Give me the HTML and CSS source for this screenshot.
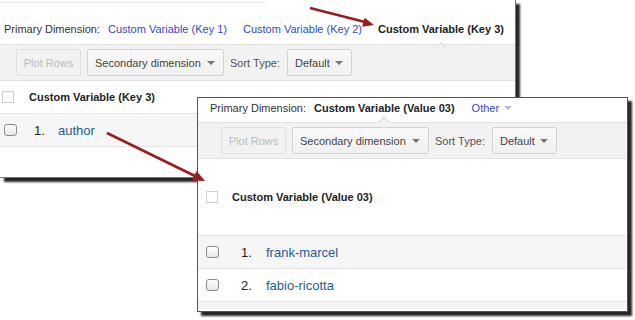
FILE: index.html
```html
<!DOCTYPE html>
<html lang="en">
<head>
    <meta charset="UTF-8">
    <title>Custom Variables</title>
    <link rel="stylesheet" href="styles.css">
</head>
<body>
    <div class="shot">
        <!-- back window: key report -->
        <div class="panel panel-back">
            <div class="panel-top"></div>
            <div class="dims">
                <span class="dims-label">Primary Dimension:</span>
                <a class="dim-link">Custom Variable (Key 1)</a>
                <a class="dim-link">Custom Variable (Key 2)</a>
                <span class="dim-current">Custom Variable (Key 3)</span>
            </div>
            <div class="toolbar">
                <button class="btn btn-plot" disabled>Plot Rows</button>
                <button class="btn btn-second">Secondary dimension <span class="caret"></span></button>
                <span class="sort-label">Sort Type:</span>
                <button class="btn btn-default">Default <span class="caret"></span></button>
            </div>
            <div class="table-head">
                <span class="check-square"></span>
                <span class="head-title">Custom Variable (Key 3)</span>
            </div>
            <div class="row row-shaded">
                <span class="check"></span>
                <span class="row-num">1.</span>
                <a class="row-link">author</a>
            </div>
            <div class="panel-foot"></div>
        </div>

        <!-- front window: value report -->
        <div class="panel panel-front">
            <div class="dims">
                <span class="dims-label">Primary Dimension:</span>
                <span class="dim-current">Custom Variable (Value 03)</span>
                <a class="dim-link dim-other">Other <span class="caret caret-light"></span></a>
            </div>
            <div class="toolbar">
                <button class="btn btn-plot" disabled>Plot Rows</button>
                <button class="btn btn-second">Secondary dimension <span class="caret"></span></button>
                <span class="sort-label">Sort Type:</span>
                <button class="btn btn-default">Default <span class="caret"></span></button>
            </div>
            <div class="table-head">
                <span class="check-square"></span>
                <span class="head-title">Custom Variable (Value 03)</span>
            </div>
            <div class="row row-shaded">
                <span class="check"></span>
                <span class="row-num">1.</span>
                <a class="row-link">frank-marcel</a>
            </div>
            <div class="row">
                <span class="check"></span>
                <span class="row-num">2.</span>
                <a class="row-link">fabio-ricotta</a>
            </div>
            <div class="panel-foot"></div>
        </div>

        <!-- red arrows drawn over the two windows -->
        <svg class="arrows" width="635" height="320" viewBox="0 0 635 320">
            <line x1="310" y1="8" x2="365" y2="22" stroke="#9b1c1c" stroke-width="2.4"/>
            <polygon points="374,25 362.2,26.8 364.6,17.7" fill="#9b1c1c"/>
            <line x1="107" y1="133" x2="195" y2="176" stroke="#9b1c1c" stroke-width="2.6"/>
            <polygon points="205,181 192,180.4 196.6,171" fill="#9b1c1c"/>
        </svg>
    </div>
</body>
</html>
```

FILE: styles.css
```css
html, body {
    margin: 0;
    padding: 0;
    background-color: #fff;
}
body {
    font-family: "Liberation Sans", Arial, sans-serif;
    font-size: 11px;
    color: #333;
}
.shot {
    position: relative;
    width: 635px;
    height: 320px;
    overflow: hidden;
}
.panel {
    position: absolute;
    background-color: #fff;
    box-sizing: border-box;
}
.panel-back {
    left: 0;
    top: 0;
    width: 516px;
    height: 178px;
    border-right: 1px solid #777;
    border-bottom: 1px solid #777;
    box-shadow: 4px 4px 2px rgba(0, 0, 0, 0.85);
}
.panel-front {
    left: 197px;
    top: 97px;
    width: 431px;
    height: 215px;
    border: 1px solid #555;
    box-shadow: 4px 4px 2px rgba(0, 0, 0, 0.85);
}
.panel-top {
    width: 266px;
    height: 2px;
    border-bottom: 1px solid #e6e6e6;
}

/* dimension tabs */
.dims {
    display: flex;
    align-items: center;
    box-sizing: border-box;
    white-space: nowrap;
}
.panel-back .dims {
    height: 41px;
    padding: 11px 0 0 4px;
}
.panel-front .dims {
    height: 24px;
    padding: 0 0 4px 12px;
}
.dims-label {
    color: #333;
    margin-right: 8px;
}
.dim-link {
    color: #3549c8;
    margin-right: 16px;
    cursor: pointer;
}
.dim-current {
    position: relative;
    align-self: stretch;
    display: flex;
    align-items: center;
    font-weight: bold;
    color: #222;
}
.panel-front .dim-current {
    margin-right: 17px;
}
.dim-current::after {
    content: "";
    position: absolute;
    left: 50%;
    bottom: -8px;
    width: 7px;
    height: 7px;
    margin-left: -4px;
    background-color: #f2f2f2;
    border-top: 1px solid #dcdcdc;
    border-left: 1px solid #dcdcdc;
    transform: rotate(45deg);
}
.dim-other {
    display: flex;
    align-items: center;
    gap: 5px;
}

/* toolbar */
.toolbar {
    display: flex;
    align-items: center;
    gap: 6px;
    height: 37px;
    box-sizing: border-box;
    background-color: #f2f2f2;
    border-top: 1px solid #e2e2e2;
    border-bottom: 1px solid #e2e2e2;
    white-space: nowrap;
}
.panel-back .toolbar {
    padding-left: 16px;
}
.panel-front .toolbar {
    padding-left: 23px;
}
.btn {
    height: 27px;
    box-sizing: border-box;
    display: flex;
    align-items: center;
    justify-content: space-between;
    white-space: nowrap;
    font-family: "Liberation Sans", Arial, sans-serif;
    font-size: 11px;
    color: #444;
    border: 1px solid #d3d3d3;
    border-radius: 2px;
    background: linear-gradient(#f9f9f9, #f0f0f0);
    padding: 0 8px;
}
.btn-plot {
    width: 65px;
    padding: 0;
    justify-content: center;
    color: #bcbcbc;
    background: #f2f2f2;
    border-color: #e0e0e0;
}
.btn-second {
    width: 137px;
    padding: 0 8px 0 7px;
}
.btn-default {
    width: 65px;
    padding: 0 8px 0 7px;
}
.sort-label {
    color: #555;
    margin-right: 1px;
}
.caret {
    display: inline-block;
    width: 0;
    height: 0;
    border-left: 4px solid transparent;
    border-right: 4px solid transparent;
    border-top: 4px solid #777;
}
.caret-light {
    border-top-color: #bbb;
}

/* table */
.table-head {
    display: flex;
    align-items: center;
    box-sizing: border-box;
    border-bottom: 1px solid #e4e4e4;
}
.panel-back .table-head {
    height: 33px;
    padding-left: 2px;
    gap: 15px;
}
.panel-front .table-head {
    height: 77px;
    padding-left: 8px;
    gap: 14px;
}
.check-square {
    width: 12px;
    height: 12px;
    box-sizing: border-box;
    border: 1px solid #d0d0d0;
    background-color: #fff;
}
.head-title {
    font-weight: bold;
    color: #222;
}
.row {
    display: grid;
    align-items: center;
    height: 33px;
    box-sizing: border-box;
    border-bottom: 1px solid #e4e4e4;
    font-size: 13px;
}
.panel-back .row {
    grid-template-columns: 30px 24px 1fr;
    padding-left: 4px;
}
.panel-front .row {
    grid-template-columns: 35px 25px 1fr;
    padding-left: 8px;
}
.row-shaded {
    background-color: #f6f6f6;
}
.check {
    width: 13px;
    height: 12px;
    box-sizing: border-box;
    border: 1px solid #8c8c8c;
    border-radius: 3px;
    background: linear-gradient(#fff, #e6e6e6);
}
.row-num {
    color: #222;
}
.row-link {
    color: #1f5a98;
    cursor: pointer;
}
.panel-front .panel-foot {
    height: 8px;
    background-color: #f6f6f6;
}

.arrows {
    position: absolute;
    left: 0;
    top: 0;
    pointer-events: none;
}
```
